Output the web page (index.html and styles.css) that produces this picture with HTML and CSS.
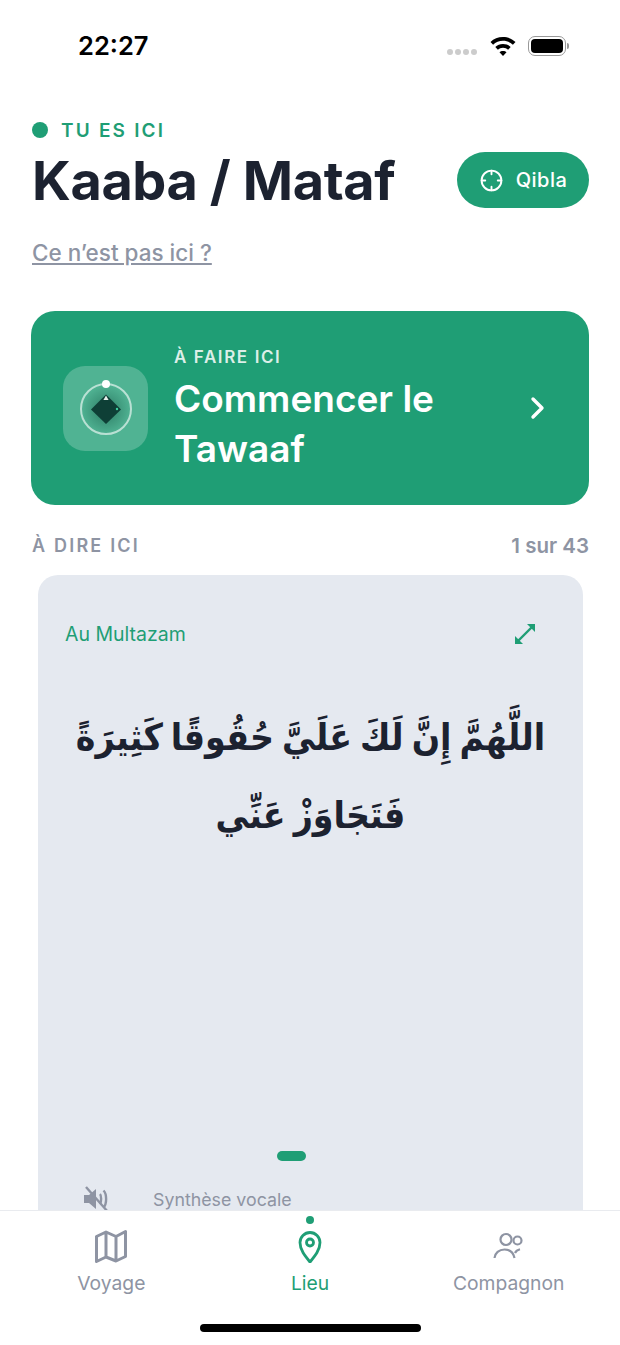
FILE: index.html
```html
<!DOCTYPE html>
<html lang="fr">
<head>
<meta charset="utf-8">
<title>Lieu</title>
<link rel="stylesheet" href="styles.css">
</head>
<body>
<div class="screen">
  <header class="status">
    <span class="time">22:27</span>
    <div class="status-icons">
      <div class="signal"><i></i><i></i><i></i><i></i></div>
      <svg class="wifi" width="28" height="21" viewBox="0 0 28 21"><path d="M14 1C9 1 4.800 2.800 1.500 6l2.600 2.800C6.700 6.300 10.200 4.800 14 4.800s7.300 1.500 9.900 4L26.500 6C23.200 2.800 19 1 14 1z"/><path d="M14 8c-3 0-5.700 1.100-7.700 3l2.600 2.800c1.300-1.300 3.100-2 5.100-2s3.800.7 5.100 2l2.600-2.800c-2-1.900-4.700-3-7.700-3z"/><path d="M14 15c-1.500 0-2.700.5-3.500 1.300L14 20l3.500-3.700C16.700 15.500 15.500 15 14 15z"/></svg>
      <div class="battery"><span class="battery-fill"></span></div>
      <span class="battery-cap"></span>
    </div>
  </header>

  <section class="place">
    <div class="here"><span class="here-dot"></span><span>TU ES ICI</span></div>
    <div class="title-row">
      <h1>Kaaba / Mataf</h1>
      <button class="qibla">
        <svg width="25" height="25" viewBox="0 0 24 24" fill="none" stroke="#fff" stroke-width="1.800" stroke-linecap="round"><circle cx="12" cy="12" r="9.500"/><path d="M12 2.500v3.500M12 18v3.500M2.500 12H6M18 12h3.500"/></svg>
        <span>Qibla</span>
      </button>
    </div>
    <a class="not-here">Ce n’est pas ici ?</a>
  </section>

  <section class="todo">
    <div class="todo-icon">
      <svg width="60" height="60" viewBox="0 0 60 60">
        <defs><radialGradient id="halo" cx="50%" cy="52%" r="50%"><stop offset="0" stop-color="#0f4f3e" stop-opacity=".55"/><stop offset="1" stop-color="#0f4f3e" stop-opacity="0"/></radialGradient></defs>
        <circle cx="30" cy="31" r="25" fill="url(#halo)"/>
        <circle cx="30" cy="31" r="25" fill="none" stroke="#fff" stroke-opacity=".6" stroke-width="2"/>
        <path d="M30 16.500 45 31.500 30 46 15 31.500z" fill="#0e3f36"/>
        <path d="M30 17.500l2.600 4.500h-5.200z" fill="#e6efe9"/>
        <circle cx="41" cy="31" r="1.200" fill="#3fd19e"/>
        <circle cx="30" cy="6" r="4" fill="#fff"/>
      </svg>
    </div>
    <div class="todo-text">
      <div class="todo-label">À FAIRE ICI</div>
      <div class="todo-title">Commencer le Tawaaf</div>
    </div>
    <svg class="chevron" width="18" height="24" viewBox="0 0 18 24" fill="none" stroke="#fff" stroke-width="3.400" stroke-linecap="round" stroke-linejoin="round"><path d="M4 3l9 9-9 9"/></svg>
  </section>

  <section class="say">
    <div class="say-head"><span class="say-label">À DIRE ICI</span><span class="say-count">1 sur 43</span></div>
    <article class="card">
      <div class="card-head">
        <span class="card-place">Au Multazam</span>
        <svg width="24" height="24" viewBox="0 0 24 24" fill="none" stroke="#1f9e75" stroke-width="2.400"><path d="M3 21 21 3"/><path d="M14 2h8v8zM2 14v8h8z" fill="#1f9e75" stroke="none"/></svg>
      </div>
      <p class="arabic" dir="rtl" lang="ar">اللَّهُمَّ إِنَّ لَكَ عَلَيَّ حُقُوقًا كَثِيرَةً فَتَجَاوَزْ عَنِّي</p>
      <div class="pager"><span class="pager-bar"></span></div>
      <div class="tts">
        <svg width="30" height="28" viewBox="0 0 30 28"><path d="M2 10h5l7-6v20l-7-6H2z" fill="#8e94a3"/><path d="M18 9c1.500 1.500 1.500 8 0 10M21.500 5.500c3.500 3.500 3.500 13.500 0 17" fill="none" stroke="#8e94a3" stroke-width="2.400"/><path d="M4 2l22 25" stroke="#8e94a3" stroke-width="2.400"/></svg>
        <span>Synthèse vocale</span>
      </div>
    </article>
  </section>

  <nav class="tabs">
    <div class="tab">
      <span class="tab-dot"></span>
      <svg width="34" height="34" viewBox="0 0 34 34" fill="none" stroke="#8e94a3" stroke-width="3" stroke-linejoin="round"><path d="M2.500 7.500 12 3l10 4.500L31.500 2.500v25l-9.500 4.500L12 28l-9.500 4.500zM12 3v25M22 7.500v24.500"/></svg>
      <span class="tab-label">Voyage</span>
    </div>
    <div class="tab tab-active">
      <span class="tab-dot tab-dot-on"></span>
      <svg width="34" height="34" viewBox="0 0 34 34" fill="none" stroke="#1f9e75" stroke-width="2.800"><path d="M17 33C12 27 7 21 7 13.500A10 10 0 0 1 27 13.500C27 21 22 27 17 33z" stroke-linejoin="round"/><circle cx="17" cy="13.500" r="3.500"/></svg>
      <span class="tab-label">Lieu</span>
    </div>
    <div class="tab">
      <span class="tab-dot"></span>
      <svg width="34" height="34" viewBox="0 0 34 34" fill="none" stroke="#8e94a3" stroke-width="2.200"><circle cx="14" cy="10.500" r="5.500"/><circle cx="25.500" cy="11.500" r="4"/><path d="M2.500 29c.5-5 4.500-8.500 10-8.500s9 3.500 10 8.500M23 24c.8-1.800 2.500-3.200 5-3.800"/></svg>
      <span class="tab-label">Compagnon</span>
    </div>
    <span class="home-bar"></span>
  </nav>
</div>
</body>
</html>
```

FILE: styles.css
```css
* { box-sizing: border-box; }
html, body { margin: 0; padding: 0; background: #fff; }
.screen {
  position: relative;
  width: 620px;
  height: 1345px;
  overflow: hidden;
  font-family: Inter, "Noto Sans", "DejaVu Sans", sans-serif;
  color: #1c2230;
}
.status {
  height: 92px;
  display: flex;
  justify-content: space-between;
  align-items: flex-start;
  padding: 29px 51px 0 78px;
}
.time { font-size: 25.500px; font-weight: 600; color: #000; line-height: 34px; }
.status-icons { display: flex; align-items: center; height: 34px; }
.signal { display: flex; gap: 2px; margin: 12px 12px 0 0; }
.signal i { width: 6px; height: 6px; border-radius: 50%; background: #ccc; }
.wifi { margin-right: 11px; fill: #000; }
.battery { width: 38px; height: 20px; border: 1.500px solid #999; border-radius: 7px; padding: 2px; }
.battery-fill { display: block; height: 100%; background: #000; border-radius: 4px; }
.battery-cap { width: 2px; height: 6px; background: #999; margin-left: 1px; border-radius: 0 2px 2px 0; }

.place { padding: 0 31px; }
.here { display: flex; align-items: center; gap: 13px; height: 30px; margin-top: 23px; color: #1f9e75; font-size: 19px; font-weight: 600; letter-spacing: 2.200px; }
.here-dot { width: 16px; height: 16px; margin-left: 1px; border-radius: 50%; background: #1f9e75; }
.title-row { display: flex; justify-content: space-between; align-items: center; height: 64px; margin-top: 4px; }
h1 { margin: 0 0 0 1px; font-size: 54px; font-weight: 700; letter-spacing: -.4px; line-height: 64px; color: #1c2230; }
.qibla { display: flex; align-items: center; justify-content: center; gap: 12px; width: 132px; height: 56px; margin-bottom: 2px; border: 0; border-radius: 28px; background: #1f9e75; color: #fff; font: 500 20px Inter, sans-serif; letter-spacing: .5px; }
.not-here { display: block; margin: 25px 0 0 1px; font-size: 22.500px; font-weight: 500; line-height: 30px; color: #8e94a3; text-decoration: underline; text-underline-offset: 2px; }

.todo { display: flex; align-items: center; margin: 43px 31px 0; height: 194px; padding: 0 42px 0 32px; background: #1f9e75; border-radius: 24px; color: #fff; }
.todo-icon { flex: none; width: 85px; height: 85px; border-radius: 22px; background: rgba(255,255,255,.22); display: flex; align-items: center; justify-content: center; }
.todo-text { flex: 1; margin-left: 26px; padding-top: 3px; }
.todo-label { font-size: 17px; font-weight: 600; letter-spacing: 1.600px; line-height: 24px; color: rgba(255,255,255,.85); }
.todo-title { font-size: 37px; font-weight: 600; line-height: 50px; margin-top: 5px; max-width: 300px; }
.chevron { flex: none; }

.say-head { display: flex; justify-content: space-between; align-items: center; margin: 26px 31px 0 32px; height: 28px; color: #8e94a3; font-weight: 600; }
.say-label { font-size: 18px; letter-spacing: 2.200px; }
.say-count { font-size: 20.500px; }
.card { display: flex; flex-direction: column; margin: 16px 37px 0 38px; height: 660px; padding: 42px 27px 0; background: #e5e9f0; border-radius: 20px; }
.card-head { display: flex; justify-content: space-between; align-items: center; height: 34px; padding-right: 19px; }
.card-place { color: #1f9e75; font-size: 19.500px; font-weight: 400; }
.arabic { margin: 48px 0 0; height: 452px; text-align: center; font-family: "DejaVu Sans Condensed", "DejaVu Sans", sans-serif; font-size: 37px; font-weight: 700; word-spacing: -3.500px; line-height: 78px; color: #1c2230; }
.pager { display: flex; justify-content: center; padding-right: 38px; }
.pager-bar { width: 29px; height: 10px; border-radius: 5px; background: #1f9e75; }
.tts { display: flex; align-items: center; gap: 41px; margin-top: 24px; padding-left: 17px; color: #8e94a3; font-size: 17.800px; }

.tabs { position: absolute; left: 0; right: 0; bottom: 0; height: 135px; display: grid; grid-template-columns: 1fr 1fr 1fr; background: #fff; border-top: 1.500px solid #e9ebef; padding: 0 12px; }
.tab { display: flex; flex-direction: column; align-items: center; padding-top: 5px; color: #8e94a3; font-size: 19.300px; font-weight: 400; }
.tab-active { color: #1f9e75; }
.tab-dot { width: 8px; height: 8px; border-radius: 50%; margin-bottom: 5px; }
.tab-dot-on { background: #1f9e75; }
.tab-label { margin-top: 6px; line-height: 28px; }
.home-bar { position: absolute; left: 200px; bottom: 13px; width: 221px; height: 8px; border-radius: 4px; background: #000; }
```
